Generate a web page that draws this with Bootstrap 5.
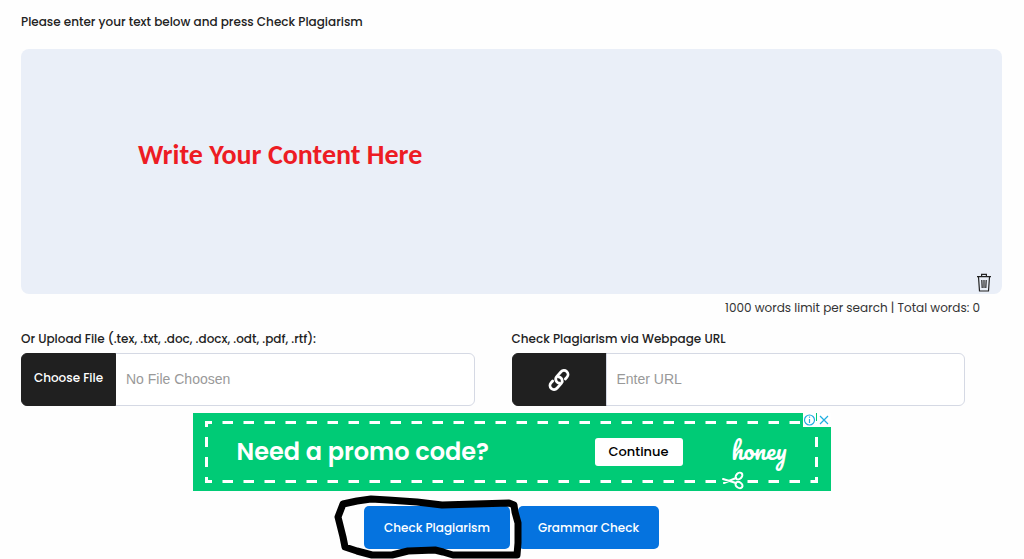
<!DOCTYPE html>
<html lang="en">
<head>
<meta charset="utf-8">
<meta name="viewport" content="width=device-width, initial-scale=1">
<title>Plagiarism Checker</title>
<link href="https://cdn.jsdelivr.net/npm/bootstrap@5.3.0/dist/css/bootstrap.min.css" rel="stylesheet">
<style>
  body { font-family: Poppins, Inter, sans-serif; font-size: 12px; line-height: 18px; color: #222; background: #fefefe; }
  .checker { padding: 13px 22px 0 21px; }
  .intro { margin-bottom: 18px; font-size: 12px; font-weight: 500; }
  .content-box { height: 245px; padding: 88px 40px 10px 117px; border: 0; border-radius: 8px; background: #eaeff8; resize: none; font: 700 28px/36px Carlito, Calibri, Lato, sans-serif; color: #ed1c24; }
  .content-box:focus { background: #eaeff8; color: #ed1c24; }
  .content-box::placeholder { color: #ed1c24; opacity: 1; }
  .clear-btn { right: 10px; bottom: 2px; line-height: 0; color: #222; }
  .counter { padding: 5px 22px 0 0; margin-bottom: 13px; color: #333; }
  .source { padding-right: 37px; }
  .source .form-label { margin-bottom: 5px; font-weight: 500; }
  .source .form-control { height: 53px; padding: 0 10px 2px; border-color: #d5d9e4; font: 14px/20px "Liberation Sans", sans-serif; }
  .source .form-control::placeholder { color: #999; opacity: 1; }
  .source .btn, .source .input-group-text { width: 95px; padding: 0 0 3px; border-color: #202020; background: #202020; color: #fff; font-size: 12px; font-weight: 500; justify-content: center; }
  .source .input-group-text { padding: 0; }
  .promo { max-width: 638px; height: 78px; margin: 7px auto 15px; background: #00cb76; }
  .promo-title { padding-left: 44px; font-size: 24px; font-weight: 600; line-height: 30px; }
  .promo-btn { width: 88px; height: 28px; margin-right: 49px; padding: 0; border-radius: 3px; font-size: 13px; font-weight: 500; line-height: 20px; }
  .promo-brand { width: 57px; margin-right: 42px; padding-bottom: 4px; font: 400 24px/26px Pacifico, "Dancing Script", cursive; }
  .ad-marks { top: 0; right: 0; }
  .actions .btn { height: 43px; padding: 0; border: 0; border-radius: 5px; background: #0573df; color: #fff; font-size: 12px; font-weight: 500; }
  .btn-check-text { width: 146px; }
  .btn-grammar { width: 141px; }
  .marker { left: -31px; top: -13px; pointer-events: none; }
</style>
</head>
<body>
<main class="checker min-vh-100 overflow-hidden">
  <label class="intro d-block" for="content">Please enter your text below and press Check Plagiarism</label>
  <div class="position-relative">
    <textarea class="form-control d-block content-box" id="content" placeholder="Write Your Content Here"></textarea>
    <button type="button" class="btn p-0 border-0 position-absolute clear-btn" aria-label="Clear text">
      <svg width="16" height="19" viewBox="0 0 16 19" fill="none" stroke="currentColor" stroke-width="1.2"><path d="M1 3.6h14M5.600 3.400V1.300h4.800v2.100M2.500 4l1 14h9l1-14M5.800 7l.4 8M8 7v8M10.200 7l-.4 8"/></svg>
    </button>
  </div>
  <div class="counter text-end">1000 words limit per search | Total words: 0</div>

  <div class="row g-0">
    <div class="col-6 source">
      <label class="form-label d-block" for="file">Or Upload File (.tex, .txt, .doc, .docx, .odt, .pdf, .rtf):</label>
      <div class="input-group">
        <button type="button" class="btn">Choose File</button>
        <input type="text" class="form-control" id="file" placeholder="No File Choosen">
      </div>
    </div>
    <div class="col-6 source">
      <label class="form-label d-block" for="url">Check Plagiarism via Webpage URL</label>
      <div class="input-group">
        <span class="input-group-text">
          <svg width="24" height="24" viewBox="-12 -12 24 24" fill="none" stroke="#fff" stroke-width="2.8" stroke-linecap="round"><g transform="rotate(-48)"><path d="M5 4H7.500a4 4 0 0 0 0-8H1a4 4 0 0 0-3 6.500"/><path d="M-5-4H-7.500a4 4 0 0 0 0 8H-1a4 4 0 0 0 3-6.500"/></g></svg>
        </span>
        <input type="url" class="form-control" id="url" placeholder="Enter URL">
      </div>
    </div>
  </div>

  <aside class="promo position-relative d-flex align-items-center text-white">
    <svg class="position-absolute top-0 start-0 w-100 h-100" viewBox="0 0 638 78" fill="none" stroke="#fff" stroke-width="3">
      <path d="M12 9.500H625M12 68.500H625" stroke-dasharray="10.500 10.500" stroke-dashoffset="3.500"/>
      <path d="M13.500 8V70M623.500 8V70" stroke-dasharray="10 10" stroke-dashoffset="4"/>
      <path d="M529 68H552" stroke="#00cb76" stroke-width="12"/>
      <g stroke-width="2" stroke-linecap="round"><path d="M530 66l13 4M531 70l12-5"/><ellipse cx="546" cy="63" rx="3.800" ry="2.800" transform="rotate(-45 546 63)"/><ellipse cx="546" cy="72" rx="3.800" ry="2.800" transform="rotate(35 546 72)"/></g>
    </svg>
    <div class="promo-title position-relative me-auto">Need a promo code?</div>
    <button type="button" class="btn btn-light bg-white border-0 position-relative promo-btn">Continue</button>
    <div class="promo-brand position-relative">honey</div>
    <svg class="position-absolute ad-marks" width="28" height="14" viewBox="0 0 28 14" fill="none" stroke="#20aee0" stroke-width="1.200"><path d="M0 0h13v14H0zM14 0h14v14H14z" fill="#fff" stroke="none"/><circle cx="6.500" cy="7" r="5"/><path d="M6.500 6v4M6.500 3.500v1.300M17 3l8 8M25 3l-8 8"/></svg>
  </aside>

  <div class="d-flex justify-content-center">
    <div class="actions position-relative d-flex">
      <button type="button" class="btn btn-check-text me-1">Check Plagiarism</button>
      <button type="button" class="btn btn-grammar ms-1">Grammar Check</button>
      <svg class="position-absolute marker" width="192" height="66" viewBox="0 0 192 66" fill="none" stroke="#000" stroke-width="7" stroke-linecap="round" stroke-linejoin="round"><path d="M10 11 24 8 38 6 55 7 84 9 109 12 176 10 181 12 182 19 185 30 185 50 184 62 120 62 110 59 102 57 75 58 59 62 39 62 24 58 12 54 10 44 5 24Z"/></svg>
    </div>
  </div>
</main>
<script src="https://cdn.jsdelivr.net/npm/bootstrap@5.3.0/dist/js/bootstrap.bundle.min.js"></script>
</body>
</html>
